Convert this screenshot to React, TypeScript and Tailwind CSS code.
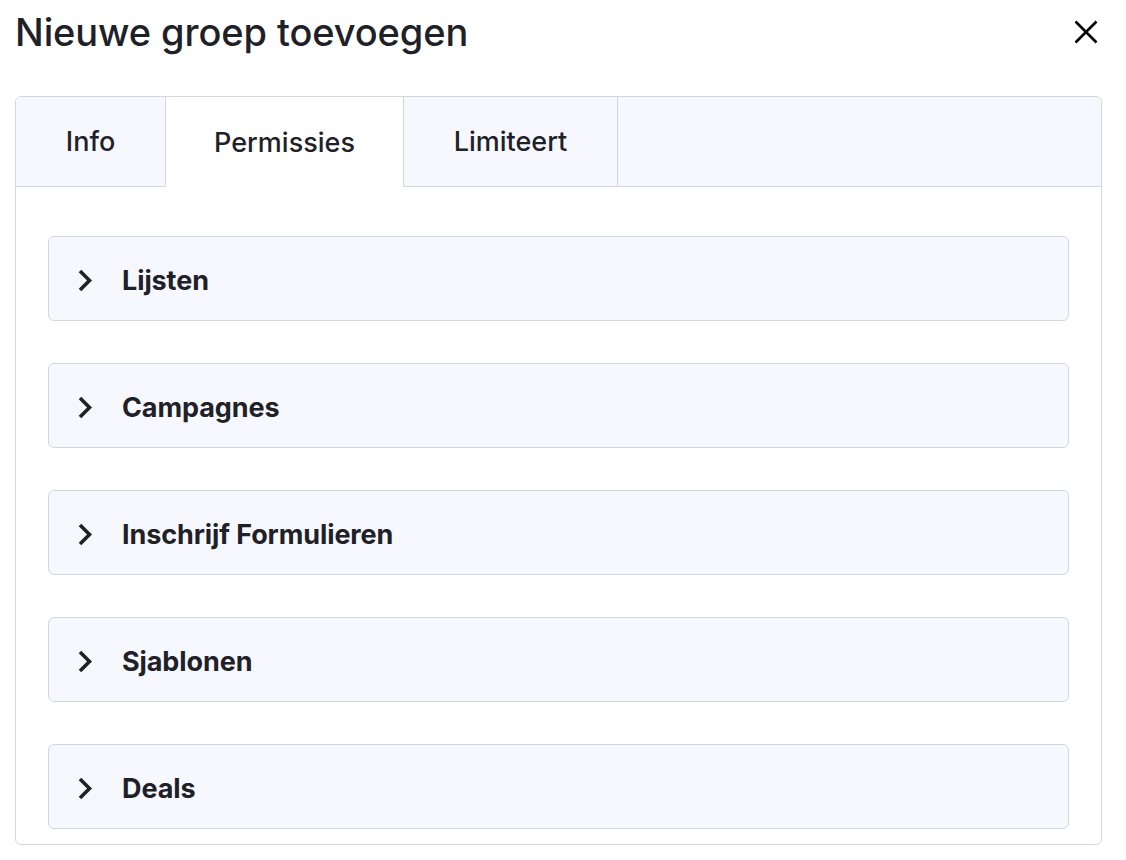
import React from "react";

const items = ["Lijsten", "Campagnes", "Inschrijf Formulieren", "Sjablonen", "Deals"];

function Chevron() {
  return (
    <svg width="16" height="24" viewBox="0 0 16 24" fill="none" className="shrink-0">
      <path d="M3 2 L12.5 11.5 L3 21" stroke="#1f2128" strokeWidth="3.6" strokeLinecap="butt" strokeLinejoin="miter" />
    </svg>
  );
}

export default function App() {
  return (
    <div className="w-[1126px] h-[860px] bg-white overflow-hidden text-[#1f2128]" style={{ fontFamily: "Inter, 'Noto Sans', sans-serif" }}>
      <div className="flex items-start justify-between pl-[15px] pr-[28px] pt-[8px] h-[96px]">
        <h1 className="text-[38px] leading-[48px] font-medium tracking-[-0.1px]">Nieuwe groep toevoegen</h1>
        <button className="mt-[12px] w-[24px] h-[24px] flex items-center justify-center">
          <svg width="24" height="24" viewBox="0 0 24 24" fill="none">
            <path d="M1.5 1.5 L22.5 22.5 M22.5 1.5 L1.5 22.5" stroke="#000" strokeWidth="2.6" />
          </svg>
        </button>
      </div>
      <div className="ml-[15px] w-[1087px] h-[749px] border border-[#d3d5e3] rounded-[6px] overflow-hidden flex flex-col">
        <div className="flex h-[90px] shrink-0 bg-[#f7f8fd]">
          <div className="w-[150px] border-r border-b border-[#d3d5e3] flex items-center justify-center text-[27px] font-medium pt-[2px]">Info</div>
          <div className="w-[238px] border-r border-[#d3d5e3] bg-white flex items-center justify-center text-[27px] font-medium pt-[2px]">Permissies</div>
          <div className="w-[214px] border-r border-b border-[#d3d5e3] flex items-center justify-center text-[27px] font-medium pt-[2px]">Limiteert</div>
          <div className="flex-1 border-b border-[#d3d5e3]"></div>
        </div>
        <div className="flex flex-col gap-[42px] px-[32px] pt-[49px]">
          {items.map((t) => (
            <div key={t} className="h-[85px] shrink-0 rounded-[6px] border border-[#d3d5e3] bg-[#f7f8fd] flex items-center pl-[28px] pt-[5px] gap-[29px]">
              <Chevron />
              <span className="text-[27px] font-bold tracking-[-0.1px]">{t}</span>
            </div>
          ))}
        </div>
      </div>
    </div>
  );
}
